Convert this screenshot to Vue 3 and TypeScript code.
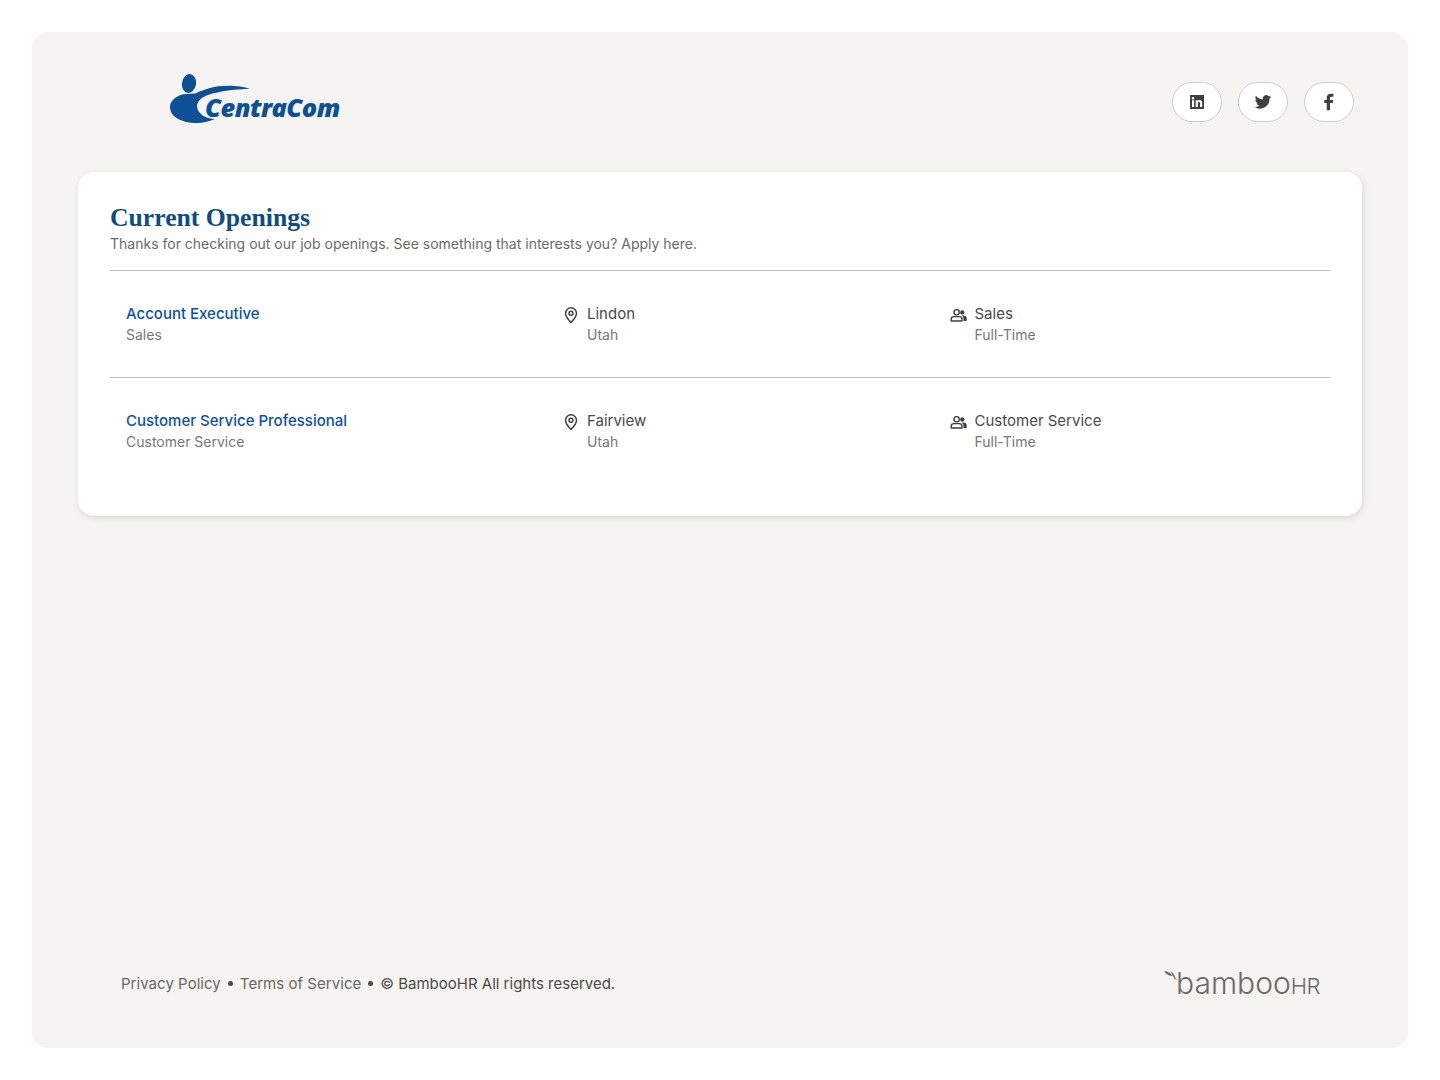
<script setup lang="ts">
interface Job {
	title: string
	team: string
	city: string
	state: string
	department: string
	type: string
}

const jobs: Job[] = [
	{ title: 'Account Executive', team: 'Sales', city: 'Lindon', state: 'Utah', department: 'Sales', type: 'Full-Time' },
	{ title: 'Customer Service Professional', team: 'Customer Service', city: 'Fairview', state: 'Utah', department: 'Customer Service', type: 'Full-Time' }
]
</script>

<template>
	<main class="page">
		<header class="top">
			<div class="logo">
				<svg class="logo-mark" viewBox="0 0 84 52" width="84" height="52">
					<ellipse cx="19" cy="10.500" rx="7" ry="9.500" fill="#0d5096" transform="rotate(10 19 10.500)" />
					<path d="M80 16C70 12 50 12 40 15C33 17 28 19 25 20.500L16 21C6 22 0 28 0 34C0 44 12 50 27 50C33 50 40 48 45 46C36 46 28 41 27 34C27 28 32 24 38 22C50 18 66 16 80 16Z" fill="#0d5096" />
				</svg>
				<span class="logo-text">CentraCom</span>
			</div>
			<nav class="social">
				<a class="social-btn">
					<svg viewBox="0 0 16 16" width="16" height="16">
						<path fill-rule="evenodd" d="M1.200 1h13.600c.1 0 .2.100.2.200v13.600c0 .1-.1.200-.2.200H1.200c-.1 0-.2-.1-.2-.2V1.200c0-.1.100-.2.200-.2ZM3 6.300V13h2.100V6.300H3ZM4 3a1.200 1.200 0 1 0 0 2.500A1.200 1.200 0 0 0 4 3Zm2.700 3.300V13h2.100V9.500c0-1 .4-1.600 1.200-1.600s1.100.6 1.100 1.500V13h2.100V9c0-1.900-1-2.900-2.500-2.900-1 0-1.600.5-1.900 1V6.300H6.700Z" fill="#3f3f3f" />
					</svg>
				</a>
				<a class="social-btn">
					<svg viewBox="0 0 24 24" width="18" height="18">
						<path d="M23 5.100c-.8.4-1.700.6-2.600.7.900-.6 1.600-1.400 2-2.500-.9.500-1.800.9-2.900 1.100A4.500 4.500 0 0 0 11.800 8.500C8 8.300 4.700 6.500 2.500 3.700c-1.200 2.100-.6 4.700 1.400 6-.7 0-1.400-.2-2-.6 0 2.200 1.500 4 3.600 4.500-.7.200-1.400.2-2 .1.600 1.800 2.200 3.100 4.200 3.100A9.100 9.100 0 0 1 1 18.700 12.800 12.800 0 0 0 20.700 7.300c.9-.6 1.700-1.300 2.300-2.200Z" fill="#3f3f3f" />
					</svg>
				</a>
				<a class="social-btn">
					<svg viewBox="0 0 16 16" width="20" height="20">
						<path d="M6.200 14.500V8.800H4.200V6.300h2V4.500C6.200 2.400 7.500 1.300 9.500 1.300c.9 0 1.700.1 2 .1v2.300h-1.400c-1 0-1.300.5-1.300 1.300v1.300h2.600l-.4 2.500H8.800v5.700H6.200Z" fill="#3f3f3f" />
					</svg>
				</a>
			</nav>
		</header>

		<section class="card">
			<h1 class="heading">Current Openings</h1>
			<p class="intro">Thanks for checking out our job openings. See something that interests you? Apply here.</p>
			<ul class="jobs">
				<li class="job" v-for="job in jobs" :key="job.title">
					<div class="col col-title">
						<a class="job-link">{{ job.title }}</a>
						<span class="sub">{{ job.team }}</span>
					</div>
					<div class="col col-place">
						<svg class="icon pin" viewBox="0 0 16 18" width="16" height="18">
							<path d="M8 16.500C5 13.500 2.500 10.500 2.500 7.300a5.500 5.500 0 0 1 11 0C13.500 10.500 11 13.500 8 16.500Z" fill="none" stroke="#3f3f3f" stroke-width="1.500" stroke-linejoin="round" />
							<circle cx="8" cy="7.200" r="2" fill="none" stroke="#3f3f3f" stroke-width="1.400" />
						</svg>
						<div class="stack">
							<span class="main">{{ job.city }}</span>
							<span class="sub">{{ job.state }}</span>
						</div>
					</div>
					<div class="col col-dept">
						<svg class="icon people" viewBox="0 0 18 16" width="17" height="15">
							<circle cx="7" cy="4.500" r="2.800" fill="none" stroke="#3f3f3f" stroke-width="1.500" />
							<path d="M1.200 13.800V12c0-1.800 1.500-2.800 3-2.800h5.500c1.500 0 3 1 3 2.800v1.800H1.200Z" fill="none" stroke="#3f3f3f" stroke-width="1.500" stroke-linejoin="round" />
							<circle cx="13" cy="4.800" r="2.300" fill="#3f3f3f" />
							<path d="M12 8h2.500c1.800 0 3.200 1.200 3.200 3v2.800h-3.400V11c0-1.200-.9-2.300-2.300-3Z" fill="#3f3f3f" />
						</svg>
						<div class="stack">
							<span class="main">{{ job.department }}</span>
							<span class="sub">{{ job.type }}</span>
						</div>
					</div>
				</li>
			</ul>
		</section>

		<footer class="bottom">
			<div class="legal">
				<a>Privacy Policy</a>
				<span class="dot"></span>
				<a>Terms of Service</a>
				<span class="dot"></span>
				<span class="rights">© BambooHR All rights reserved.</span>
			</div>
			<div class="bamboo">
				<svg class="leaf" viewBox="0 0 14 12" width="14" height="12">
					<path d="M0 0C4 .5 7 2 8.500 5C5 5 2 3.500 0 0ZM7 .5C9 1.500 10.500 3.500 11.500 7.500L13 8.500L11 8.500C9.500 6 8 3.500 7 .5Z" fill="#6a6a68" />
				</svg>
				<span class="bamboo-word">bamboo</span><span class="bamboo-hr">HR</span>
			</div>
		</footer>
	</main>
</template>

<style>
html, body {
	margin: 0;
	background: #fff;
}
</style>

<style scoped>
.page {
	box-sizing: border-box;
	margin: 32px;
	height: 1016px;
	padding: 0 46px;
	background: #f5f4f1;
	border-radius: 16px;
	display: flex;
	flex-direction: column;
	font-family: Inter, "Liberation Sans", sans-serif;
}

.top {
	height: 140px;
	display: flex;
	justify-content: space-between;
	align-items: flex-start;
}

.logo {
	margin: 41px 0 0 92px;
	position: relative;
	width: 172px;
	height: 52px;
}

.logo-mark {
	display: block;
}

.logo-text {
	position: absolute;
	left: 35px;
	top: 18px;
	font-family: "Open Sans", sans-serif;
	font-style: italic;
	font-weight: 800;
	font-size: 25.500px;
	line-height: 32px;
	letter-spacing: -0.6px;
	color: #0d5096;
}

.social {
	display: flex;
	gap: 16px;
	margin: 50px 8px 0 0;
}

.social-btn {
	box-sizing: border-box;
	width: 50px;
	height: 40px;
	background: #fff;
	border: 1px solid #cfcdc9;
	border-radius: 20px;
	display: flex;
	align-items: center;
	justify-content: center;
}

.card {
	box-sizing: border-box;
	height: 344px;
	padding: 31px 32px 0;
	background: #fff;
	border-radius: 16px;
	box-shadow: 1px 2px 6px rgba(60, 60, 50, 0.16);
}

.heading {
	margin: 0;
	font-family: "Liberation Serif", serif;
	font-weight: 700;
	font-size: 25.700px;
	line-height: 30px;
	color: #0f4c81;
}

.intro {
	margin: 1px 0 0;
	font-size: 14px;
	line-height: 20px;
	color: #6a6a68;
}

.jobs {
	list-style: none;
	margin: 16px 0 0;
	padding: 0;
}

.job {
	box-sizing: border-box;
	height: 107px;
	padding: 32px 16px 0;
	border-top: 1px solid #bdbdb9;
	display: flex;
}

.col {
	display: flex;
}

.col-title {
	width: 437px;
	flex-direction: column;
}

.col-place {
	width: 387px;
	gap: 8px;
}

.col-dept {
	gap: 7.500px;
}

.icon {
	flex: none;
}

.pin {
	margin-top: 3px;
}

.people {
	margin-top: 5px;
}

.stack {
	display: flex;
	flex-direction: column;
}

.job-link {
	font-size: 15px;
	line-height: 21px;
	font-weight: 500;
	color: #0b4fb0;
}

.main {
	font-size: 15px;
	line-height: 21px;
	color: #4a4a48;
}

.sub {
	font-size: 14px;
	line-height: 21px;
	color: #777775;
}

.bottom {
	margin-top: auto;
	height: 64px;
	padding: 0 42px 0 43px;
	margin-bottom: 33px;
	display: flex;
	justify-content: space-between;
	align-items: center;
}

.legal {
	display: flex;
	align-items: center;
	gap: 7px;
	font-size: 15px;
	letter-spacing: 0.04px;
	color: #686866;
}

.dot {
	width: 5px;
	height: 5px;
	border-radius: 50%;
	background: #4a4a48;
}

.rights {
	color: #4a4a48;
	letter-spacing: 0;
}

.bamboo {
	position: relative;
	display: flex;
	align-items: baseline;
	margin-top: 2px;
	color: #6a6a68;
}

.leaf {
	position: absolute;
	left: -12px;
	top: 4px;
}

.bamboo-word {
	font-weight: 300;
	font-size: 30px;
	line-height: 32px;
}

.bamboo-hr {
	font-weight: 300;
	font-size: 22px;
	line-height: 32px;
	letter-spacing: -0.5px;
}
</style>
